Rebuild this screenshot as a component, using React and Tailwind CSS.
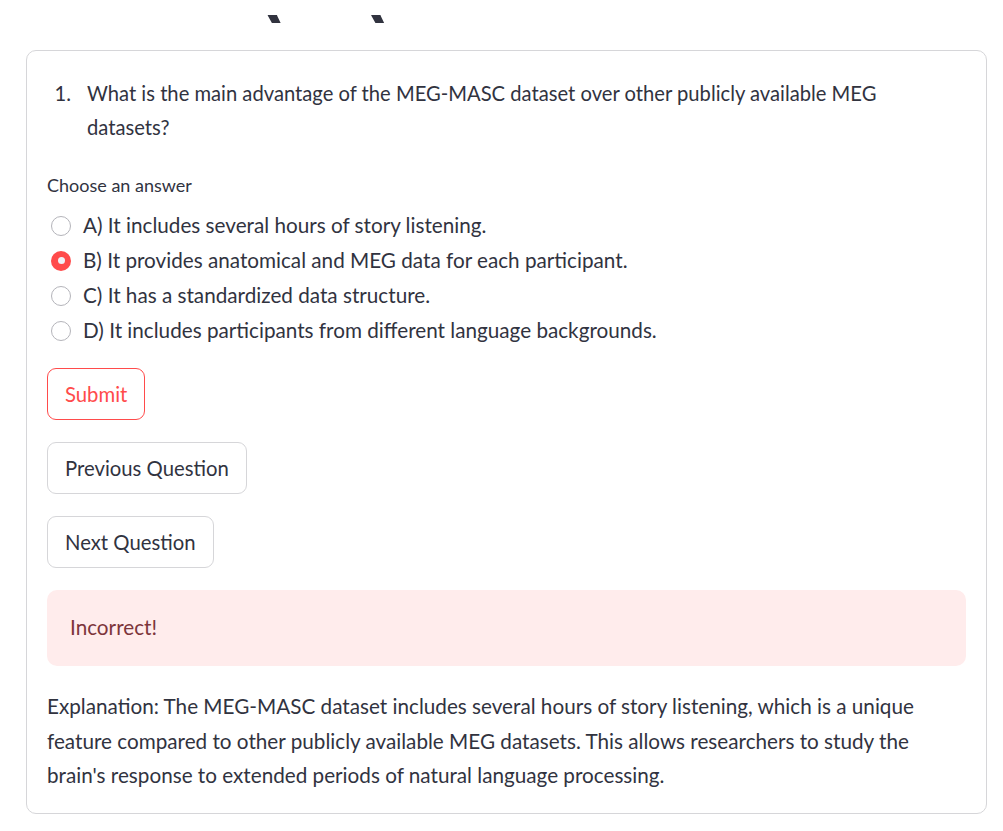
import { useState } from "react";

// ── Opciones del quiz ─────────────────────────────────────────────────────────
const OPTIONS = [
  "A) It includes several hours of story listening.",
  "B) It provides anatomical and MEG data for each participant.",
  "C) It has a standardized data structure.",
  "D) It includes participants from different language backgrounds.",
];

const Radio = ({ checked }) =>
  checked ? (
    <span className="flex items-center justify-center w-[20px] h-[20px] rounded-full bg-[#ff4b4b]">
      <span className="w-[7px] h-[7px] rounded-full bg-[#f0f2f6]"></span>
    </span>
  ) : (
    <span className="w-[20px] h-[20px] rounded-full border-[1.5px] border-[#b4b4ba] bg-white"></span>
  );

const Button = ({ children, primary }) => (
  <button
    className={`h-[52px] px-[17px] rounded-[9px] border bg-white text-[20.3px] leading-none ${
      primary ? "border-[#ff4b4b] text-[#ff4b4b]" : "border-[#d6d6d9] text-[#31333f]"
    }`}
  >
    {children}
  </button>
);

export default function App() {
  const [selected, setSelected] = useState(1);

  return (
    <div className="min-h-screen bg-white text-[#31333f] font-['Lato','Liberation_Sans',sans-serif]">
      {/* Título cortado por el scroll */}
      <div className="h-[50px] pt-[15px]">
        <div className="h-[9px] overflow-hidden">
          <div className="-mt-[51px] flex text-[60px] leading-[60px] font-bold font-['DejaVu_Sans',sans-serif] text-[#31333f]">
            <span className="ml-[258px]">(</span>
            <span className="ml-[76px]">(</span>
          </div>
        </div>
      </div>

      {/* Tarjeta */}
      <div className="ml-[26px] w-[961px] border border-[#d6d6d9] rounded-[10px] px-[20px] pt-[25px] pb-[20px]">
        <div className="flex text-[20.2px] leading-[34px]">
          <span className="w-[40px] shrink-0 text-right pr-[16px]">1.</span>
          <p>
            What is the main advantage of the MEG-MASC dataset over other publicly available MEG
            <br />
            datasets?
          </p>
        </div>

        <p className="mt-[31px] text-[18px] leading-[20px]">Choose an answer</p>

        <div className="mt-[13px] flex flex-col">
          {OPTIONS.map((opt, i) => (
            <label
              key={i}
              onClick={() => setSelected(i)}
              className="flex items-center h-[35px] pl-[4px] gap-[12px] text-[20.7px] cursor-pointer"
            >
              <Radio checked={selected === i} />
              <span>{opt}</span>
            </label>
          ))}
        </div>

        <div className="mt-[20px] flex flex-col items-start gap-[22px]">
          <Button primary>Submit</Button>
          <Button>Previous Question</Button>
          <Button>Next Question</Button>
        </div>

        <div className="mt-[22px] h-[76px] flex items-center rounded-[10px] bg-[#ffecec] px-[23px] text-[20.7px] text-[#7d353b]">
          Incorrect!
        </div>

        <p className="mt-[23px] text-[20.7px] leading-[34.5px]">
          Explanation: The MEG-MASC dataset includes several hours of story listening, which is a unique
          <br />
          feature compared to other publicly available MEG datasets. This allows researchers to study the
          <br />
          brain's response to extended periods of natural language processing.
        </p>
      </div>
    </div>
  );
}
